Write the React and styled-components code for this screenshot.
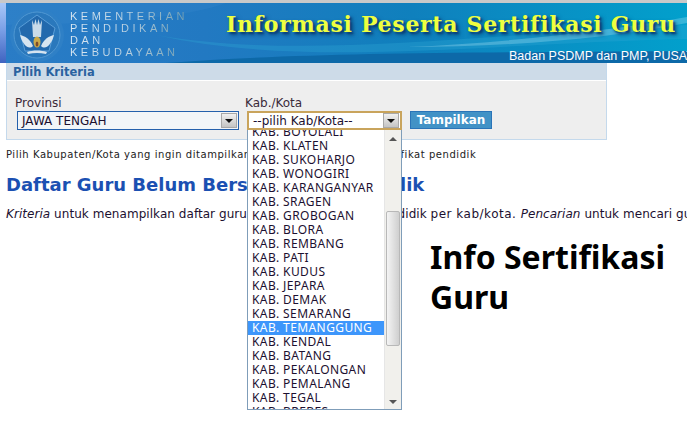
import React from 'react';
import styled, { createGlobalStyle } from 'styled-components';

const kabupaten = [
  'KAB. BOYOLALI', 'KAB. KLATEN', 'KAB. SUKOHARJO', 'KAB. WONOGIRI', 'KAB. KARANGANYAR',
  'KAB. SRAGEN', 'KAB. GROBOGAN', 'KAB. BLORA', 'KAB. REMBANG', 'KAB. PATI', 'KAB. KUDUS',
  'KAB. JEPARA', 'KAB. DEMAK', 'KAB. SEMARANG', 'KAB. TEMANGGUNG', 'KAB. KENDAL', 'KAB. BATANG',
  'KAB. PEKALONGAN', 'KAB. PEMALANG', 'KAB. TEGAL', 'KAB. BREBES',
];

const GlobalStyle = createGlobalStyle`
  html, body {
    margin: 0;
    height: 100%;
    background: #fff;
    overflow: hidden;
  }
  body {
    font-family: "DejaVu Sans", Verdana, sans-serif;
    color: #222;
  }
`;

const Page = styled.div`
  position: relative;
  width: 687px;
  height: 441px;
  overflow: hidden;
  border-top: 3px solid #c9c9c9;
  box-sizing: border-box;
`;

const Banner = styled.header`
  position: relative;
  display: flex;
  height: 60px;
  overflow: hidden;
  background: linear-gradient(90deg, #2a7cc6 0%, #2279c2 30%, #0f80bd 60%, #02a0cc 100%);
`;

const EdgeStrip = styled.div`
  flex: none;
  width: 6px;
  background: linear-gradient(180deg, #a9c8f8 0%, #7a9fe6 45%, #3f63c0 100%);
`;

const BannerArt = styled.svg`
  position: absolute;
  left: 6px;
  top: 0;
`;

const Emblem = styled.svg`
  flex: none;
  width: 58px;
  height: 60px;
  margin-left: 2px;
  position: relative;
  filter: blur(0.5px);
`;

const Ministry = styled.div`
  flex: none;
  width: 118px;
  margin: 7px 0 0 4px;
  position: relative;
  font-family: "Liberation Sans", Arial, sans-serif;
  font-size: 11px;
  line-height: 12px;
  letter-spacing: 3.5px;
  color: transparent;
  background: linear-gradient(90deg, #dce9f3 0%, #b9d0e0 50%, #6f9db0 100%);
  -webkit-background-clip: text;
  background-clip: text;
`;

const MinistryLine = styled.div`
  white-space: nowrap;
`;

const Title = styled.h1`
  position: absolute;
  left: 226px;
  top: 8px;
  margin: 0;
  white-space: nowrap;
  font-family: "DejaVu Serif", "Liberation Serif", serif;
  font-size: 22px;
  line-height: 26px;
  font-weight: bold;
  letter-spacing: 0.7px;
  color: #eeff40;
  text-shadow: 2px 2px 2px #0a3f78, 3px 3px 4px rgba(6, 50, 100, 0.7);
`;

const Agency = styled.div`
  position: absolute;
  left: 509px;
  top: 46px;
  white-space: nowrap;
  font-family: "Liberation Sans", Arial, sans-serif;
  font-size: 12.5px;
  line-height: 14px;
  color: #fff;
`;

const Panel = styled.section`
  box-sizing: border-box;
  width: 601px;
  height: 77px;
  margin-left: 6px;
  background: #eeeeee;
  border: 1px solid #c4d9ec;
  border-top: 0;
`;

const PanelTitle = styled.h2`
  margin: 0;
  height: 17px;
  padding-left: 6px;
  background: #cddbe8;
  border-bottom: 1px solid #fff;
  color: #2a62a0;
  font-size: 11.5px;
  line-height: 19px;
  font-weight: bold;
`;

const Fields = styled.div`
  display: flex;
  align-items: flex-end;
  padding: 15px 0 0 8px;
`;

const Field = styled.div`
  display: flex;
  flex-direction: column;
  width: ${(props) => props.$width}px;
`;

const Label = styled.label`
  font-size: 12px;
  line-height: 15px;
  color: #3a2a3a;
`;

const Select = styled.div`
  box-sizing: border-box;
  display: flex;
  align-items: center;
  justify-content: space-between;
  height: 19px;
  width: ${(props) => props.$width}px;
  margin-left: 2px;
  padding: 0 1px 0 ${(props) => props.$pad}px;
  border: ${(props) => (props.$open ? '2px solid #c9a45c' : '1px solid #2460ac')};
  background: ${(props) => (props.$open ? '#fff' : '#f2f5f8')};
  font-size: 12px;
  color: #1c1030;
  white-space: nowrap;
`;

const SelectArrow = styled.span`
  flex: none;
  display: flex;
  align-items: center;
  justify-content: center;
  width: 16px;
  height: 15px;
  background: linear-gradient(180deg, #f0f0f0, #c4c4c4);
  border: 1px solid #a8a8a8;
  box-sizing: border-box;
  &::after {
    content: '';
    border-left: 4px solid transparent;
    border-right: 4px solid transparent;
    border-top: 4px solid #111;
  }
`;

const ShowButton = styled.button`
  box-sizing: border-box;
  height: 18px;
  width: 82px;
  margin: 0 0 1px 8px;
  padding: 0;
  background: #4292c6;
  border: 1px solid #2a74b8;
  color: #fff;
  font-family: "DejaVu Sans", Verdana, sans-serif;
  font-size: 12px;
  font-weight: bold;
  line-height: 14px;
`;

const Content = styled.main`
  padding-left: 6px;
  white-space: nowrap;
`;

const Hint = styled.p`
  margin: 9px 0 0;
  font-size: 10px;
  line-height: 12px;
  letter-spacing: 0.55px;
  color: #222;
`;

const Heading = styled.h3`
  margin: 13px 0 0;
  font-size: 18px;
  line-height: 22px;
  font-weight: bold;
  color: #1b50b2;
`;

const Lead = styled.p`
  margin: 11px 0 0;
  font-size: 12px;
  line-height: 15px;
  letter-spacing: 0.05px;
  color: #1c1030;
`;

const WideWords = styled.span`
  letter-spacing: 0.5px;
`;

const DropList = styled.div`
  position: absolute;
  left: 247px;
  top: 127px;
  box-sizing: border-box;
  display: flex;
  width: 155px;
  height: 280px;
  background: #fff;
  border: 1px solid #7f9db9;
  border-top: 0;
  overflow: hidden;
`;

const Options = styled.ul`
  flex: 1;
  list-style: none;
  margin: -5px 0 0;
  padding: 0;
`;

const Option = styled.li`
  height: 14px;
  padding-left: 4px;
  font-family: "Noto Sans", Tahoma, sans-serif;
  font-size: 12px;
  line-height: 14px;
  letter-spacing: 0.4px;
  white-space: nowrap;
  color: ${(props) => (props.$selected ? '#fff' : '#1c1030')};
  background: ${(props) => (props.$selected ? '#3d96fb' : 'transparent')};
`;

const ScrollTrack = styled.div`
  position: relative;
  flex: none;
  width: 16px;
  background: #f1f0ec;
  border-left: 1px solid #e6e6e6;
`;

const ScrollArrow = styled.span`
  position: absolute;
  left: 4px;
  ${(props) => (props.$down ? 'bottom: 5px;' : 'top: 7px;')}
  border-left: 4px solid transparent;
  border-right: 4px solid transparent;
  ${(props) => (props.$down ? 'border-top: 4px solid #555;' : 'border-bottom: 4px solid #555;')}
`;

const ScrollThumb = styled.div`
  position: absolute;
  left: 1px;
  top: 81px;
  width: 14px;
  height: 135px;
  box-sizing: border-box;
  background: linear-gradient(90deg, #f4f4f4, #cfcfcf);
  border: 1px solid #b8b8b8;
  border-radius: 2px;
`;

const Watermark = styled.div`
  position: absolute;
  left: 430px;
  top: 234px;
  width: 250px;
  font-family: "Noto Sans", Tahoma, sans-serif;
  font-size: 32px;
  line-height: 40px;
  font-weight: bold;
  color: #000;
`;

const App = () => {
  return (
    <Page>
      <GlobalStyle />
      <Banner>
        <EdgeStrip />
        <BannerArt width="681" height="60" viewBox="0 0 681 60">
          <path d="M160 60 C 300 50 420 50 681 48 L681 60 Z" fill="#0d69a8" />
          <path d="M150 32 C 300 58 480 30 681 22 L681 36 C 480 40 300 66 150 32 Z" fill="#2fa6d4" opacity="0.35" />
          <path d="M0 0 H220 C 180 14 120 20 0 22 Z" fill="#3a8ad0" opacity="0.25" />
          <path d="M400 44 C 500 40 600 28 681 14 L681 20 C 600 36 500 44 400 44 Z" fill="#9fdcf0" opacity="0.35" />
        </BannerArt>
        <Emblem viewBox="0 -2 58 60">
          <circle cx="29" cy="30" r="27" fill="#2f80c6" />
          <circle cx="29" cy="30" r="23" fill="#2a78bc" stroke="#4f97d2" strokeWidth="1" />
          <path d="M29 10 L47 23 L41 46 H17 L11 23 Z" fill="#2269ad" stroke="#5a9ed8" strokeWidth="1" />
          <path d="M24 15 L25 32 H33 L34 15 L32 20 L30.5 14 L29 20 L27.5 14 L26 20 Z" fill="#c9dbea" />
          <path d="M12 30 C 17 31 22 34 25 41 C 21 45 15 41 12 30 Z" fill="#d6e4f0" />
          <path d="M46 30 C 41 31 36 34 33 41 C 37 45 43 41 46 30 Z" fill="#d6e4f0" />
          <path d="M19 47 C 25 45 33 45 39 47 L38 49 C 32 47.5 26 47.5 20 49 Z" fill="#d6e4f0" />
          <ellipse cx="29" cy="37" rx="3.5" ry="5.5" fill="#c9a94a" />
          <ellipse cx="29" cy="39" rx="1.4" ry="2.6" fill="#7a4b2a" />
        </Emblem>
        <Ministry>
          <MinistryLine>KEMENTERIAN</MinistryLine>
          <MinistryLine>PENDIDIKAN</MinistryLine>
          <MinistryLine>DAN</MinistryLine>
          <MinistryLine>KEBUDAYAAN</MinistryLine>
        </Ministry>
        <Title>Informasi Peserta Sertifikasi Guru</Title>
        <Agency>Badan PSDMP dan PMP, PUSAT</Agency>
      </Banner>

      <Panel>
        <PanelTitle>Pilih Kriteria</PanelTitle>
        <Fields>
          <Field $width={230}>
            <Label>Provinsi</Label>
            <Select $width={222} $pad={4}>
              JAWA TENGAH
              <SelectArrow />
            </Select>
          </Field>
          <Field $width={157}>
            <Label>Kab./Kota</Label>
            <Select $width={155} $pad={4} $open>
              --pilih Kab/Kota--
              <SelectArrow />
            </Select>
          </Field>
          <ShowButton>Tampilkan</ShowButton>
        </Fields>
      </Panel>

      <Content>
        <Hint>Pilih Kabupaten/Kota yang ingin ditampilkan untuk lihat data guru sertifikat pendidik</Hint>
        <Heading>Daftar Guru Belum Bersertifikat Pendidik</Heading>
        <Lead>
          <em>Kriteria</em> untuk menampilkan daftar guru belum bersertifikasi pendidik{' '}
          <WideWords>per kab/kota. </WideWords>
          <em>Pencarian</em> untuk mencari guru
        </Lead>
      </Content>

      <DropList>
        <Options>
          {kabupaten.map((name) => (
            <Option key={name} $selected={name === 'KAB. TEMANGGUNG'}>
              {name}
            </Option>
          ))}
        </Options>
        <ScrollTrack>
          <ScrollArrow />
          <ScrollThumb />
          <ScrollArrow $down />
        </ScrollTrack>
      </DropList>

      <Watermark>Info Sertifikasi Guru</Watermark>
    </Page>
  );
};

export default App;
